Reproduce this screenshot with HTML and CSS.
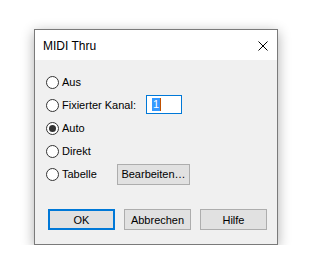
FILE: index.html
```html
<!DOCTYPE html>
<html lang="de">
<head>
<meta charset="utf-8">
<title>MIDI Thru</title>
<link rel="stylesheet" href="styles.css">
</head>
<body>
<div class="window">
  <div class="titlebar">
    <span class="title">MIDI Thru</span>
    <svg class="close" width="10" height="10" viewBox="0 0 10 10"><path d="M0.5 0.5 L9.5 9.5 M9.5 0.5 L0.5 9.5" stroke="#000" stroke-width="1" fill="none"/></svg>
  </div>
  <div class="content">
    <div class="row"><span class="radio"></span><span class="label">Aus</span></div>
    <div class="row"><span class="radio"></span><span class="label label-fix">Fixierter Kanal:</span><span class="input"><span class="sel">1</span><span class="caret"></span></span></div>
    <div class="row"><span class="radio checked"></span><span class="label">Auto</span></div>
    <div class="row"><span class="radio"></span><span class="label">Direkt</span></div>
    <div class="row"><span class="radio"></span><span class="label label-tab">Tabelle</span><span class="btn btn-edit">Bearbeiten…</span></div>
    <div class="footer">
      <span class="btn btn-main default">OK</span>
      <span class="btn btn-main">Abbrechen</span>
      <span class="btn btn-main">Hilfe</span>
    </div>
  </div>
</div>
</body>
</html>
```

FILE: styles.css
```css
html, body {
  margin: 0;
  padding: 0;
  background: #ffffff;
}
body {
  font-family: "Liberation Sans", Arial, sans-serif;
  font-size: 11px;
  color: #000;
}
.window {
  margin: 29px 0 0 34px;
  width: 242px;
  height: 214px;
  border: 1px solid #7a7a7a;
  background: #f0f0f0;
  box-shadow: 0 3px 12px rgba(0, 0, 0, 0.32);
}
.titlebar {
  height: 30px;
  background: #ffffff;
  display: flex;
  align-items: center;
  justify-content: space-between;
  padding: 0 9px 0 8px;
}
.title {
  font-size: 12px;
  padding-top: 1px;
}
.close {
  display: block;
  margin-top: 1px;
}
.content {
  padding: 10px 0 0 11px;
}
.row {
  height: 23px;
  display: flex;
  align-items: center;
}
.radio {
  width: 11px;
  height: 11px;
  border: 1px solid #333333;
  border-radius: 50%;
  background: #ffffff;
  flex: none;
  position: relative;
  margin-top: 1px;
}
.radio.checked::after {
  content: "";
  position: absolute;
  left: 2px;
  top: 2px;
  width: 7px;
  height: 7px;
  border-radius: 50%;
  background: #333333;
}
.label {
  margin-left: 3px;
  white-space: nowrap;
}
.label-fix {
  width: 84px;
}
.label-tab {
  width: 55px;
}
.input {
  width: 34px;
  height: 17px;
  border: 1px solid #0078d7;
  background: #ffffff;
  display: flex;
  align-items: center;
  padding-left: 5px;
  box-sizing: content-box;
  margin-top: -1px;
  width: 29px;
}
.sel {
  background: #3399ff;
  color: #ffffff;
  height: 13px;
  line-height: 13px;
  padding: 0 1px;
}
.caret {
  width: 1px;
  height: 13px;
  background: #c05000;
}
.btn {
  background: #e1e1e1;
  border: 1px solid #adadad;
  display: flex;
  align-items: center;
  justify-content: center;
  box-sizing: border-box;
  white-space: nowrap;
}
.btn-edit {
  width: 73px;
  height: 21px;
  margin-top: 1px;
}
.footer {
  display: flex;
  gap: 9px;
  margin-top: 24px;
  padding-left: 2px;
}
.btn-main {
  width: 67px;
  height: 21px;
}
.btn-main.default {
  border: 2px solid #0078d7;
}
```
